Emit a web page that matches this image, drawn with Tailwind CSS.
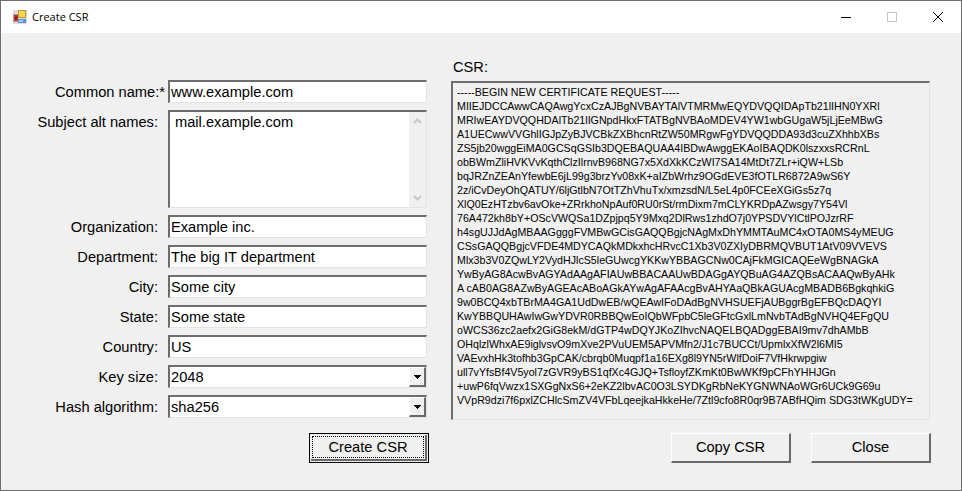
<!DOCTYPE html>
<html>
<head>
<meta charset="utf-8">
<script src="https://cdn.jsdelivr.net/npm/@tailwindcss/browser@4"></script>
</head>
<body class="m-0 overflow-hidden bg-[#f0f0f0]">
<div class="w-[962px] h-[491px] flex flex-col border border-[#6f6f6f] bg-[#f0f0f0] font-['Liberation_Sans',Arial,sans-serif] text-[#000] overflow-hidden">
  <!-- title bar -->
  <div class="h-[32px] shrink-0 bg-white flex items-center pl-[11px]">
    <svg class="w-[16px] h-[16px] shrink-0" viewBox="0 0 16 16" shape-rendering="crispEdges">
      <rect x="1" y="1" width="14" height="14" fill="#dcdcdc"/>
      <rect x="1" y="5" width="5" height="8" fill="#a8a8a8"/>
      <rect x="2" y="6" width="4" height="6" fill="#c8302a"/>
      <rect x="3" y="8" width="2" height="2" fill="#7a1512"/>
      <rect x="6" y="1" width="8" height="8" fill="#b89a30"/>
      <rect x="7" y="2" width="6" height="6" fill="#f6d84e"/>
      <rect x="6" y="10" width="8" height="4" fill="#5d8fd6"/>
      <rect x="7" y="11" width="4" height="2" fill="#a9c8f0"/>
    </svg>
    <span class="ml-[4px] font-['Open_Sans',sans-serif] text-[11px] leading-[16px]">Create CSR</span>
    <div class="ml-auto flex items-center h-full">
      <div class="w-[46px] h-full flex items-center justify-center">
        <div class="w-[10px] h-px bg-black"></div>
      </div>
      <div class="w-[46px] h-full flex items-center justify-center">
        <div class="w-[10px] h-[10px] border border-[#c4c4c4]"></div>
      </div>
      <div class="w-[46px] h-full flex items-center justify-center">
        <svg class="w-[10px] h-[10px]" viewBox="0 0 10 10"><path d="M0 0L10 10M10 0L0 10" stroke="#000" stroke-width="1" fill="none"/></svg>
      </div>
    </div>
  </div>

  <!-- body -->
  <div class="flex flex-1 min-h-0">
    <!-- form -->
    <div class="w-[426px] shrink-0 pt-[47px] flex flex-col gap-[7px] text-[14.67px]">
      <div class="flex h-[23px]">
        <div class="w-[167px] shrink-0 text-right pr-[3px] leading-[25px]">Common name:*</div>
        <div class="flex-1 bg-white border-t-2 border-l-2 border-b border-r border-t-[#6d6d6d] border-l-[#6d6d6d] border-b-[#e3e3e3] border-r-[#e3e3e3] pl-px leading-[20px]">www.example.com</div>
      </div>
      <div class="flex h-[98px]">
        <div class="w-[167px] shrink-0 text-right pr-[10px] leading-[25px]">Subject alt names:</div>
        <div class="flex-1 flex bg-white border-t-2 border-l-2 border-b border-r border-t-[#6d6d6d] border-l-[#6d6d6d] border-b-[#e3e3e3] border-r-[#e3e3e3]">
          <div class="flex-1 pl-[5px] leading-[20px]">mail.example.com</div>
          <div class="w-[17px] bg-[#f0f0f0] flex flex-col justify-between items-center py-[6px]">
            <svg class="w-[9px] h-[6px]" viewBox="0 0 9 6"><path d="M1 5L4.5 1.5L8 5" stroke="#c8c8c8" stroke-width="2" fill="none"/></svg>
            <svg class="w-[9px] h-[6px]" viewBox="0 0 9 6"><path d="M1 1L4.5 4.5L8 1" stroke="#c8c8c8" stroke-width="2" fill="none"/></svg>
          </div>
        </div>
      </div>
      <div class="flex h-[23px]">
        <div class="w-[167px] shrink-0 text-right pr-[10px] leading-[25px]">Organization:</div>
        <div class="flex-1 bg-white border-t-2 border-l-2 border-b border-r border-t-[#6d6d6d] border-l-[#6d6d6d] border-b-[#e3e3e3] border-r-[#e3e3e3] pl-px leading-[20px]">Example inc.</div>
      </div>
      <div class="flex h-[23px]">
        <div class="w-[167px] shrink-0 text-right pr-[10px] leading-[25px]">Department:</div>
        <div class="flex-1 bg-white border-t-2 border-l-2 border-b border-r border-t-[#6d6d6d] border-l-[#6d6d6d] border-b-[#e3e3e3] border-r-[#e3e3e3] pl-px leading-[20px]">The big IT department</div>
      </div>
      <div class="flex h-[23px]">
        <div class="w-[167px] shrink-0 text-right pr-[10px] leading-[25px]">City:</div>
        <div class="flex-1 bg-white border-t-2 border-l-2 border-b border-r border-t-[#6d6d6d] border-l-[#6d6d6d] border-b-[#e3e3e3] border-r-[#e3e3e3] pl-px leading-[20px]">Some city</div>
      </div>
      <div class="flex h-[23px]">
        <div class="w-[167px] shrink-0 text-right pr-[10px] leading-[25px]">State:</div>
        <div class="flex-1 bg-white border-t-2 border-l-2 border-b border-r border-t-[#6d6d6d] border-l-[#6d6d6d] border-b-[#e3e3e3] border-r-[#e3e3e3] pl-px leading-[20px]">Some state</div>
      </div>
      <div class="flex h-[23px]">
        <div class="w-[167px] shrink-0 text-right pr-[10px] leading-[25px]">Country:</div>
        <div class="flex-1 bg-white border-t-2 border-l-2 border-b border-r border-t-[#6d6d6d] border-l-[#6d6d6d] border-b-[#e3e3e3] border-r-[#e3e3e3] pl-px leading-[20px]">US</div>
      </div>
      <div class="flex h-[23px]">
        <div class="w-[167px] shrink-0 text-right pr-[10px] leading-[25px]">Key size:</div>
        <div class="flex-1 flex bg-white border-t-2 border-l-2 border-b border-r border-t-[#6d6d6d] border-l-[#6d6d6d] border-b-[#e3e3e3] border-r-[#e3e3e3] pl-px leading-[20px]">
          <span class="flex-1">2048</span>
          <div class="w-[17px] h-[20px] flex items-center justify-center bg-[#f0f0f0] border-t border-l border-b-2 border-r-2 border-t-white border-l-white border-b-[#696969] border-r-[#696969]">
            <svg class="w-[7px] h-[4px]" viewBox="0 0 7 4" shape-rendering="crispEdges"><path d="M0 0H7V1H6V2H5V3H4V4H3V3H2V2H1V1H0Z" fill="#000"/></svg>
          </div>
        </div>
      </div>
      <div class="flex h-[23px]">
        <div class="w-[167px] shrink-0 text-right pr-[10px] leading-[25px]">Hash algorithm:</div>
        <div class="flex-1 flex bg-white border-t-2 border-l-2 border-b border-r border-t-[#6d6d6d] border-l-[#6d6d6d] border-b-[#e3e3e3] border-r-[#e3e3e3] pl-px leading-[20px]">
          <span class="flex-1">sha256</span>
          <div class="w-[17px] h-[20px] flex items-center justify-center bg-[#f0f0f0] border-t border-l border-b-2 border-r-2 border-t-white border-l-white border-b-[#696969] border-r-[#696969]">
            <svg class="w-[7px] h-[4px]" viewBox="0 0 7 4" shape-rendering="crispEdges"><path d="M0 0H7V1H6V2H5V3H4V4H3V3H2V2H1V1H0Z" fill="#000"/></svg>
          </div>
        </div>
      </div>
      <div class="flex justify-end mt-[8px] mr-[-2px]">
        <div class="w-[120px] h-[30px] border border-black bg-[#f0f0f0] p-px">
          <div class="h-full border-b-2 border-r-2 border-b-[#696969] border-r-[#696969] p-px">
            <div class="h-full border border-dotted border-black flex items-center justify-center">Create CSR</div>
          </div>
        </div>
      </div>
    </div>

    <!-- CSR column -->
    <div class="ml-[24px] w-[481px] shrink-0 flex flex-col pt-[25px]">
      <div class="text-[14.67px] leading-[18px] pl-[2px] h-[23px]">CSR:</div>
      <div class="h-[339px] w-[479px] border-t-2 border-l-2 border-b border-r border-t-[#6d6d6d] border-l-[#6d6d6d] border-b-[#e3e3e3] border-r-[#e3e3e3] pl-[4px] pt-[2px] text-[10.67px] leading-[14px] whitespace-nowrap">
<div>-----BEGIN NEW CERTIFICATE REQUEST-----</div>
<div>MIIEJDCCAwwCAQAwgYcxCzAJBgNVBAYTAlVTMRMwEQYDVQQIDApTb21lIHN0YXRl</div>
<div>MRIwEAYDVQQHDAlTb21lIGNpdHkxFTATBgNVBAoMDEV4YW1wbGUgaW5jLjEeMBwG</div>
<div>A1UECwwVVGhlIGJpZyBJVCBkZXBhcnRtZW50MRgwFgYDVQQDDA93d3cuZXhhbXBs</div>
<div>ZS5jb20wggEiMA0GCSqGSIb3DQEBAQUAA4IBDwAwggEKAoIBAQDK0lszxxsRCRnL</div>
<div>obBWmZliHVKVvKqthClzIlrnvB968NG7x5XdXkKCzWI7SA14MtDt7ZLr+iQW+LSb</div>
<div>bqJRZnZEAnYfewbE6jL99g3brzYv08xK+aIZbWrhz9OGdEVE3fOTLR6872A9wS6Y</div>
<div>2z/iCvDeyOhQATUY/6ljGtlbN7OtTZhVhuTx/xmzsdN/L5eL4p0FCEeXGiGs5z7q</div>
<div>XlQ0EzHTzbv6avOke+ZRrkhoNpAuf0RU0rSt/rmDixm7mCLYKRDpAZwsgy7Y54Vl</div>
<div>76A472kh8bY+OScVWQSa1DZpjpq5Y9Mxq2DlRws1zhdO7j0YPSDVYlCtlPOJzrRF</div>
<div>h4sgUJJdAgMBAAGgggFVMBwGCisGAQQBgjcNAgMxDhYMMTAuMC4xOTA0MS4yMEUG</div>
<div>CSsGAQQBgjcVFDE4MDYCAQkMDkxhcHRvcC1Xb3V0ZXIyDBRMQVBUT1AtV09VVEVS</div>
<div>Mlx3b3V0ZQwLY2VydHJlcS5leGUwcgYKKwYBBAGCNw0CAjFkMGICAQEeWgBNAGkA</div>
<div>YwByAG8AcwBvAGYAdAAgAFIAUwBBACAAUwBDAGgAYQBuAG4AZQBsACAAQwByAHk</div>
<div>A cAB0AG8AZwByAGEAcABoAGkAYwAgAFAAcgBvAHYAaQBkAGUAcgMBADB6BgkqhkiG</div>
<div>9w0BCQ4xbTBrMA4GA1UdDwEB/wQEAwIFoDAdBgNVHSUEFjAUBggrBgEFBQcDAQYI</div>
<div>KwYBBQUHAwIwGwYDVR0RBBQwEoIQbWFpbC5leGFtcGxlLmNvbTAdBgNVHQ4EFgQU</div>
<div>oWCS36zc2aefx2GiG8ekM/dGTP4wDQYJKoZIhvcNAQELBQADggEBAI9mv7dhAMbB</div>
<div>OHqlzlWhxAE9iglvsvO9mXve2PVuUEM5APVMfn2/J1c7BUCCt/UpmlxXfW2l6MI5</div>
<div>VAEvxhHk3tofhb3GpCAK/cbrqb0Muqpf1a16EXg8l9YN5rWlfDoiF7VfHkrwpgiw</div>
<div>ull7vYfsBf4V5yol7zGVR9yBS1qfXc4GJQ+TsfloyfZKmKt0BwWKf9pCFhYHHJGn</div>
<div>+uwP6fqVwzx1SXGgNxS6+2eKZ2lbvAC0O3LSYDKgRbNeKYGNWNAoWGr6UCk9G69u</div>
<div>VVpR9dzi7f6pxlZCHlcSmZV4VFbLqeejkaHkkeHe/7Ztl9cfo8R0qr9B7ABfHQim SDG3tWKgUDY=</div>
      </div>
      <div class="flex justify-end gap-[20px] mt-[13px] pr-[1px]">
        <div class="w-[120px] h-[30px] pb-[2px] bg-[#f0f0f0] border-t border-l border-b-2 border-r-2 border-t-[#fff] border-l-[#fff] border-b-[#696969] border-r-[#696969] flex items-center justify-center text-[14.67px]">Copy CSR</div>
        <div class="w-[120px] h-[30px] pb-[2px] bg-[#f0f0f0] border-t border-l border-b-2 border-r-2 border-t-[#fff] border-l-[#fff] border-b-[#696969] border-r-[#696969] flex items-center justify-center text-[14.67px]">Close</div>
      </div>
    </div>
  </div>
</div>
</body>
</html>
